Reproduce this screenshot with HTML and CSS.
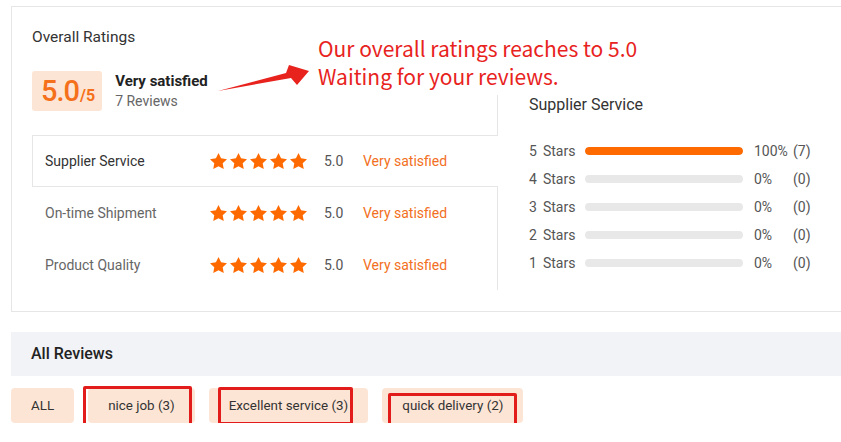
FILE: index.html
```html
<!DOCTYPE html>
<html lang="en">
<head>
<meta charset="UTF-8">
<meta name="viewport" content="width=device-width, initial-scale=1.0">
<link rel="stylesheet" href="styles.css">
<title>Supplier Reviews</title>
</head>
<body>

<div class="card">
    <div class="overview">
        <div class="summary">
            <h3 class="title">Overall Ratings</h3>
            <div class="score">
                <div class="score-box"><span class="score-num">5.0</span><span class="score-max">/5</span></div>
                <div class="score-text">
                    <div class="score-level">Very satisfied</div>
                    <div class="score-count">7 Reviews</div>
                </div>
            </div>
            <ul class="tabs">
                <li class="tab active">
                    <span class="tab-name">Supplier Service</span>
                    <span class="stars">
                        <svg viewBox="1.5 1.5 21 21"><path d="M12 1.5l3.2 6.6 7.3 1-5.3 5.1 1.3 7.2L12 18l-6.5 3.4 1.3-7.2L1.5 9.1l7.3-1z"/></svg>
                        <svg viewBox="1.5 1.5 21 21"><path d="M12 1.5l3.2 6.6 7.3 1-5.3 5.1 1.3 7.2L12 18l-6.5 3.4 1.3-7.2L1.5 9.1l7.3-1z"/></svg>
                        <svg viewBox="1.5 1.5 21 21"><path d="M12 1.5l3.2 6.6 7.3 1-5.3 5.1 1.3 7.2L12 18l-6.5 3.4 1.3-7.2L1.5 9.1l7.3-1z"/></svg>
                        <svg viewBox="1.5 1.5 21 21"><path d="M12 1.5l3.2 6.6 7.3 1-5.3 5.1 1.3 7.2L12 18l-6.5 3.4 1.3-7.2L1.5 9.1l7.3-1z"/></svg>
                        <svg viewBox="1.5 1.5 21 21"><path d="M12 1.5l3.2 6.6 7.3 1-5.3 5.1 1.3 7.2L12 18l-6.5 3.4 1.3-7.2L1.5 9.1l7.3-1z"/></svg>
                    </span>
                    <span class="tab-value">5.0</span>
                    <span class="tab-level">Very satisfied</span>
                </li>
                <li class="tab">
                    <span class="tab-name">On-time Shipment</span>
                    <span class="stars">
                        <svg viewBox="1.5 1.5 21 21"><path d="M12 1.5l3.2 6.6 7.3 1-5.3 5.1 1.3 7.2L12 18l-6.5 3.4 1.3-7.2L1.5 9.1l7.3-1z"/></svg>
                        <svg viewBox="1.5 1.5 21 21"><path d="M12 1.5l3.2 6.6 7.3 1-5.3 5.1 1.3 7.2L12 18l-6.5 3.4 1.3-7.2L1.5 9.1l7.3-1z"/></svg>
                        <svg viewBox="1.5 1.5 21 21"><path d="M12 1.5l3.2 6.6 7.3 1-5.3 5.1 1.3 7.2L12 18l-6.5 3.4 1.3-7.2L1.5 9.1l7.3-1z"/></svg>
                        <svg viewBox="1.5 1.5 21 21"><path d="M12 1.5l3.2 6.6 7.3 1-5.3 5.1 1.3 7.2L12 18l-6.5 3.4 1.3-7.2L1.5 9.1l7.3-1z"/></svg>
                        <svg viewBox="1.5 1.5 21 21"><path d="M12 1.5l3.2 6.6 7.3 1-5.3 5.1 1.3 7.2L12 18l-6.5 3.4 1.3-7.2L1.5 9.1l7.3-1z"/></svg>
                    </span>
                    <span class="tab-value">5.0</span>
                    <span class="tab-level">Very satisfied</span>
                </li>
                <li class="tab">
                    <span class="tab-name">Product Quality</span>
                    <span class="stars">
                        <svg viewBox="1.5 1.5 21 21"><path d="M12 1.5l3.2 6.6 7.3 1-5.3 5.1 1.3 7.2L12 18l-6.5 3.4 1.3-7.2L1.5 9.1l7.3-1z"/></svg>
                        <svg viewBox="1.5 1.5 21 21"><path d="M12 1.5l3.2 6.6 7.3 1-5.3 5.1 1.3 7.2L12 18l-6.5 3.4 1.3-7.2L1.5 9.1l7.3-1z"/></svg>
                        <svg viewBox="1.5 1.5 21 21"><path d="M12 1.5l3.2 6.6 7.3 1-5.3 5.1 1.3 7.2L12 18l-6.5 3.4 1.3-7.2L1.5 9.1l7.3-1z"/></svg>
                        <svg viewBox="1.5 1.5 21 21"><path d="M12 1.5l3.2 6.6 7.3 1-5.3 5.1 1.3 7.2L12 18l-6.5 3.4 1.3-7.2L1.5 9.1l7.3-1z"/></svg>
                        <svg viewBox="1.5 1.5 21 21"><path d="M12 1.5l3.2 6.6 7.3 1-5.3 5.1 1.3 7.2L12 18l-6.5 3.4 1.3-7.2L1.5 9.1l7.3-1z"/></svg>
                    </span>
                    <span class="tab-value">5.0</span>
                    <span class="tab-level">Very satisfied</span>
                </li>
            </ul>
        </div>

        <div class="detail">
            <h4 class="detail-title">Supplier Service</h4>
            <ul class="bars">
                <li class="bar-row">
                    <span class="bar-label"><span class="bar-num">5</span>Stars</span>
                    <span class="bar"><span class="bar-fill" style="width:100%"></span></span>
                    <span class="bar-pct">100%</span>
                    <span class="bar-count">(7)</span>
                </li>
                <li class="bar-row">
                    <span class="bar-label"><span class="bar-num">4</span>Stars</span>
                    <span class="bar"><span class="bar-fill" style="width:0%"></span></span>
                    <span class="bar-pct">0%</span>
                    <span class="bar-count">(0)</span>
                </li>
                <li class="bar-row">
                    <span class="bar-label"><span class="bar-num">3</span>Stars</span>
                    <span class="bar"><span class="bar-fill" style="width:0%"></span></span>
                    <span class="bar-pct">0%</span>
                    <span class="bar-count">(0)</span>
                </li>
                <li class="bar-row">
                    <span class="bar-label"><span class="bar-num">2</span>Stars</span>
                    <span class="bar"><span class="bar-fill" style="width:0%"></span></span>
                    <span class="bar-pct">0%</span>
                    <span class="bar-count">(0)</span>
                </li>
                <li class="bar-row">
                    <span class="bar-label"><span class="bar-num">1</span>Stars</span>
                    <span class="bar"><span class="bar-fill" style="width:0%"></span></span>
                    <span class="bar-pct">0%</span>
                    <span class="bar-count">(0)</span>
                </li>
            </ul>
        </div>
    </div>

    <!-- annotation drawn over the screenshot -->
    <div class="note">Our overall ratings reaches to 5.0<br>Waiting for your reviews.</div>
    <svg class="note-arrow" viewBox="0 0 98 32"><polygon points="4,29 77,16 83,23 95,9 75,3 72,11"/></svg>
</div>

<div class="reviews-head">All Reviews</div>

<div class="tags">
    <span class="tag">ALL</span>
    <span class="tag">nice job (3)</span>
    <span class="tag">Excellent service (3)</span>
    <span class="tag">quick delivery (2)</span>

    <span class="mark mark-1"></span>
    <span class="mark mark-2"></span>
    <span class="mark mark-3"></span>
</div>

</body>
</html>
```

FILE: styles.css
```css
html {
    overflow: hidden;
}

body {
    font-family: Roboto, Arial, sans-serif;
    font-size: 14px;
    color: #333;
    margin: 6px 0 0 11px;
    background-color: #FFFFFF;
}

ul {
    list-style: none;
    margin: 0;
    padding: 0;
}

.card {
    position: relative;
    width: 860px;
    border: 1px solid #e6e6e6;
    padding: 20px 0 20px 20px;
}

.overview {
    display: flex;
    align-items: flex-start;
}

.summary {
    width: 465px;
    flex: none;
}

.title {
    margin: 0;
    font-size: 15.5px;
    font-weight: normal;
    line-height: 20px;
    color: #333;
}

.score {
    display: flex;
    align-items: center;
    margin-top: 24px;
}

.score-box {
    display: flex;
    align-items: baseline;
    height: 40px;
    padding: 0 7px 0 9px;
    background-color: #fde5d5;
    border-radius: 3px;
    color: #f5701a;
    line-height: 40px;
}

.score-num {
    font-size: 29px;
    font-weight: 500;
    letter-spacing: -1px;
}

.score-max {
    font-size: 16px;
    font-weight: bold;
    margin-left: 1px;
}

.score-text {
    margin-left: 13px;
    line-height: 20px;
}

.score-level {
    font-size: 15px;
    font-weight: bold;
    color: #222;
}

.score-count {
    color: #666;
}

.tabs {
    margin-top: 24px;
}

.tab {
    display: flex;
    align-items: center;
    height: 50px;
    padding-left: 12px;
    border: 1px solid transparent;
    border-right: none;
    color: #666;
}

.tab.active {
    position: relative;
    margin-right: -1px;
    border-color: #e6e6e6;
    background-color: #FFFFFF;
    color: #333;
}

.tab-name {
    width: 165px;
}

.stars {
    display: flex;
    gap: 3px;
    margin-right: 17px;
}

.stars svg {
    width: 17px;
    height: 17px;
    fill: #ff6a00;
}

.tab-value {
    width: 39px;
    color: #555;
}

.tab-level {
    color: #f26f22;
}

.detail {
    flex: 1;
    height: 195px;
    margin-top: 68px;
    padding-left: 31px;
    border-left: 1px solid #e6e6e6;
}

.detail-title {
    margin: 0;
    font-size: 16px;
    font-weight: normal;
    line-height: 20px;
    color: #333;
}

.bars {
    margin-top: 22px;
}

.bar-row {
    display: flex;
    align-items: center;
    height: 28px;
    color: #555;
}

.bar-label {
    width: 56px;
}

.bar-num {
    margin-right: 6px;
}

.bar {
    width: 158px;
    height: 8px;
    border-radius: 4px;
    background-color: #e8e8e8;
    overflow: hidden;
}

.bar-fill {
    display: block;
    height: 100%;
    background-color: #ff6a00;
    border-radius: 4px;
}

.bar-pct {
    width: 39px;
    margin-left: 11px;
}

/* red hand-drawn notes */
.note {
    position: absolute;
    left: 306px;
    top: 27px;
    font-family: "Noto Sans CJK SC", "Noto Sans", sans-serif;
    font-size: 21px;
    line-height: 28px;
    color: #e8231e;
}

.note-arrow {
    position: absolute;
    left: 202px;
    top: 55px;
    width: 98px;
    height: 32px;
    fill: #e8231e;
}

.reviews-head {
    margin-top: 20px;
    height: 44px;
    line-height: 44px;
    padding-left: 20px;
    width: 860px;
    background-color: #f2f3f7;
    font-size: 16px;
    font-weight: 500;
    color: #222;
}

.tags {
    position: relative;
    display: flex;
    gap: 14px;
    margin-top: 12px;
}

.tag {
    height: 35px;
    line-height: 35px;
    padding: 0 20px;
    background-color: #fde5d5;
    border-radius: 4px;
    font-size: 13.4px;
    color: #333;
}

.mark {
    position: absolute;
    border: 3px solid #e21c1a;
    border-radius: 2px;
    box-sizing: border-box;
}

.mark-1 {
    left: 72px;
    top: -2px;
    width: 109px;
    height: 42px;
}

.mark-2 {
    left: 207px;
    top: -1px;
    width: 135px;
    height: 38px;
}

.mark-3 {
    left: 377px;
    top: 5px;
    width: 129px;
    height: 34px;
}
```
